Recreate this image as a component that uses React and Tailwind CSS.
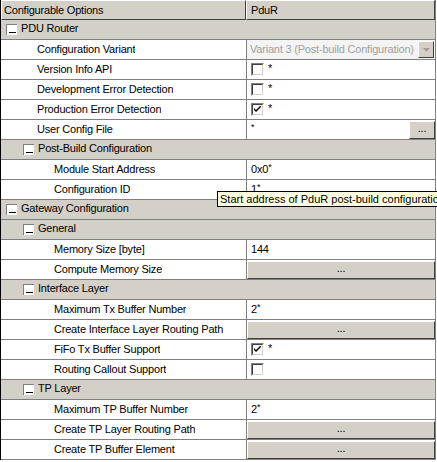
import React from "react";

const font = { fontFamily: '"Liberation Sans", Arial, sans-serif', letterSpacing: "-0.2px" };

function Minus() {
  return (
    <span className="relative inline-block w-[11px] h-[11px] bg-white border-l border-t border-[#808080] mr-[4px] shrink-0">
      <span className="absolute left-[2px] bottom-[2px] w-[7px] h-[1px] bg-black" />
    </span>
  );
}

function Checkbox({ checked }) {
  return (
    <span className="relative inline-block w-[13px] h-[13px] bg-white border border-t-[#808080] border-l-[#808080] border-b-white border-r-white shrink-0">
      <span className="absolute inset-0 border border-t-[#404040] border-l-[#404040] border-b-[#d4d0c8] border-r-[#d4d0c8]" />
      {checked && (
        <svg className="absolute left-[2px] top-[2px]" width="7" height="7" viewBox="0 0 7 7">
          <path d="M0 2 L0 4 L2 6 L7 1 L7 -1 L2 4 Z" fill="#000" />
        </svg>
      )}
    </span>
  );
}

function DotsButton({ small }) {
  return (
    <div
      className={
        "h-[18px] bg-[#d4d0c8] border border-t-white border-l-white border-b-[#404040] border-r-[#404040] flex items-center justify-center text-[11px] leading-none " +
        (small ? "w-[26px]" : "w-full")
      }
    >
      <span className="-mt-[3px]">...</span>
    </div>
  );
}

function Group({ label, indent }) {
  return (
    <div className="flex items-center h-[20px] bg-[#d4d0c8] border-b border-[#808080]">
      <div className={"flex items-center " + (indent ? "pl-[22px]" : "pl-[5px]")}>
        <Minus />
        <span className="text-[11px] leading-none -mt-[2px]">{label}</span>
      </div>
    </div>
  );
}

function Leaf({ label, indent, children, valueClass = "" }) {
  return (
    <div className="flex h-[20px] border-b border-[#808080] bg-white">
      <div className={"w-[245px] shrink-0 flex items-center text-[11px] " + (indent ? "pl-[53px]" : "pl-[36px]")}>
        <span className="leading-none -mt-[1px] whitespace-nowrap overflow-hidden">{label}</span>
      </div>
      <div className={"flex-1 border-l border-[#808080] flex items-center " + valueClass}>{children}</div>
    </div>
  );
}

function CheckVal({ checked, star = true }) {
  return (
    <div className="flex items-center pl-[4px]">
      <Checkbox checked={checked} />
      {star && <span className="ml-[4px] text-[11px] leading-none -mt-[2px]">*</span>}
    </div>
  );
}

function TextVal({ children }) {
  return <span className="pl-[4px] text-[11px] leading-none">{children}</span>;
}

function Sup({ base }) {
  return (
    <span className="pl-[4px] text-[11px] leading-none">
      {base}
      <span className="text-[9px] relative -top-[3px]">*</span>
    </span>
  );
}

export default function App() {
  return (
    <div className="relative w-[437px] h-[462px] overflow-hidden bg-white text-black" style={font}>
      <div className="w-[436px] border-l border-black border-r border-r-[#808080]">
        {/* header */}
        <div className="flex h-[20px]">
          <div className="w-[245px] shrink-0 bg-[#d4d0c8] border-t border-l border-t-white border-l-white border-b border-r border-b-[#404040] border-r-[#404040] flex items-center pl-[2px] text-[11px]">
            <span className="leading-none">Configurable Options</span>
          </div>
          <div className="flex-1 bg-[#d4d0c8] border-t border-l border-t-white border-l-white border-b border-r border-b-[#404040] border-r-[#404040] flex items-center pl-[4px] text-[11px]">
            <span className="leading-none">PduR</span>
          </div>
        </div>

        <Group label="PDU Router" />
        <Leaf label="Configuration Variant" valueClass="bg-[#f4f4f4]">
          <div className="flex items-center w-full pl-[3px] pr-[1px]">
            <span className="flex-1 text-[11px] leading-none text-[#a0a0a0] whitespace-nowrap">Variant 3 (Post-build Configuration)</span>
            <div className="w-[16px] h-[17px] bg-[#d4d0c8] border border-t-white border-l-white border-b-[#404040] border-r-[#404040] flex items-center justify-center">
              <svg width="7" height="4" viewBox="0 0 7 4">
                <path d="M0 0 H7 L3.5 4 Z" fill="#a0a0a0" />
              </svg>
            </div>
          </div>
        </Leaf>
        <Leaf label="Version Info API"><CheckVal /></Leaf>
        <Leaf label="Development Error Detection"><CheckVal /></Leaf>
        <Leaf label="Production Error Detection"><CheckVal checked /></Leaf>
        <Leaf label="User Config File">
          <div className="flex items-center w-full justify-between">
            <span className="pl-[4px] text-[9px] leading-none -mt-[4px]">*</span>
            <DotsButton small />
          </div>
        </Leaf>
        <Group label="Post-Build Configuration" indent />
        <Leaf label="Module Start Address" indent><Sup base="0x0" /></Leaf>
        <Leaf label="Configuration ID" indent><Sup base="1" /></Leaf>
        <Group label="Gateway Configuration" />
        <Group label="General" indent />
        <Leaf label="Memory Size [byte]" indent><TextVal>144</TextVal></Leaf>
        <Leaf label="Compute Memory Size" indent><DotsButton /></Leaf>
        <Group label="Interface Layer" indent />
        <Leaf label="Maximum Tx Buffer Number" indent><Sup base="2" /></Leaf>
        <Leaf label="Create Interface Layer Routing Path" indent><DotsButton /></Leaf>
        <Leaf label="FiFo Tx Buffer Support" indent><CheckVal checked /></Leaf>
        <Leaf label="Routing Callout Support" indent><CheckVal star={false} /></Leaf>
        <Group label="TP Layer" indent />
        <Leaf label="Maximum TP Buffer Number" indent><Sup base="2" /></Leaf>
        <Leaf label="Create TP Layer Routing Path" indent><DotsButton /></Leaf>
        <Leaf label="Create TP Buffer Element" indent><DotsButton /></Leaf>
      </div>

      {/* tooltip */}
      <div className="absolute left-[217px] top-[191px] h-[16px] bg-[#ffffe1] border border-black flex items-center px-[2px] whitespace-nowrap text-[11px] leading-none tracking-normal">
        Start address of PduR post-build configuration
      </div>
    </div>
  );
}
